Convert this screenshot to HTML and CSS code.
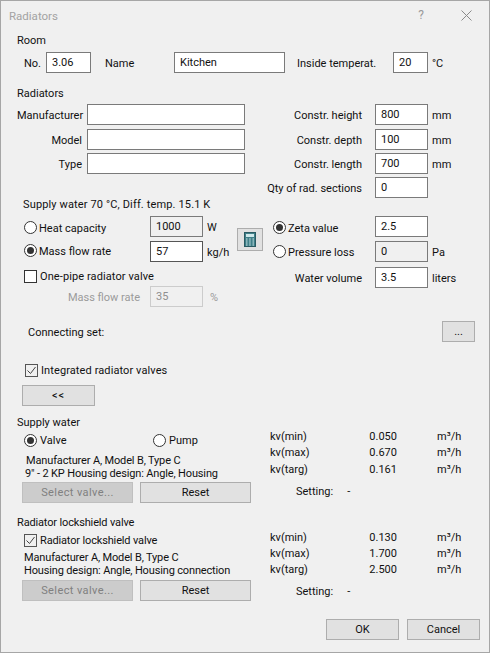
FILE: index.html
```html
<!DOCTYPE html>
<html lang="en">
<head>
<meta charset="utf-8">
<title>Radiators</title>
<link rel="stylesheet" href="styles.css">
</head>
<body>
<div class="dialog">
  <header class="titlebar">
    <span class="title">Radiators</span>
    <span class="help">?</span>
    <svg class="close" width="11" height="11" viewBox="0 0 11 11"><path d="M.5.5l10 10M10.5.5l-10 10" stroke="#8a8a8a" fill="none"/></svg>
  </header>

  <div class="heading">Room</div>
  <div class="room-row">
    <span class="lbl-no">No.</span>
    <div class="field f-no">3.06</div>
    <span class="lbl-name">Name</span>
    <div class="field f-name">Kitchen</div>
    <span class="lbl-temp">Inside temperat.</span>
    <div class="field f-temp">20</div>
    <span class="unit">°C</span>
  </div>

  <div class="heading h-rad">Radiators</div>
  <div class="rad-grid">
    <span class="r">Manufacturer</span><div class="field"></div><span class="r">Constr. height</span><div class="field">800</div><span class="unit">mm</span>
    <span class="r">Model</span><div class="field"></div><span class="r">Constr. depth</span><div class="field">100</div><span class="unit">mm</span>
    <span class="r">Type</span><div class="field"></div><span class="r">Constr. length</span><div class="field">700</div><span class="unit">mm</span>
    <span></span><span></span><span class="r">Qty of rad. sections</span><div class="field">0</div><span></span>
  </div>

  <div class="supply-note">Supply water 70 °C, Diff. temp. 15.1 K</div>

  <div class="flow">
    <div class="flow-left">
      <label class="opt down"><i class="radio"></i>Heat capacity</label><div class="field ro">1000</div><span class="unit">W</span>
      <label class="opt up"><i class="radio on"></i>Mass flow rate</label><div class="field dark">57</div><span class="unit">kg/h</span>
      <label class="opt span3"><i class="check"></i>One-pipe radiator valve</label>
      <span class="r dis pad">Mass flow rate</span><div class="field off">35</div><span class="unit dis u-pct">%</span>
    </div>
    <button class="btn calc" type="button" aria-label="Calculator">
      <svg width="12" height="15" viewBox="0 0 12 15">
        <rect x=".5" y=".5" width="11" height="14" fill="#3f7f88" stroke="#2a5a62"/>
        <rect x="2" y="2" width="8" height="3" fill="#cfe8ea"/>
        <path d="M2 7h1.500M5.200 7h1.500M8.500 7h1.500M2 9h1.500M5.200 9h1.500M8.500 9h1.500M2 11h1.500M5.200 11h1.500M8.500 11h1.500M2 13h1.500M5.200 13h1.500M8.500 13h1.500" stroke="#d5ecec"/>
      </svg>
    </button>
    <div class="flow-right">
      <label class="opt down"><i class="radio on"></i>Zeta value</label><div class="field">2.5</div><span></span>
      <label class="opt"><i class="radio"></i>Pressure loss</label><div class="field ro">0</div><span class="unit">Pa</span>
      <span class="r pad-r">Water volume</span><div class="field">3.5</div><span class="unit">liters</span>
    </div>
  </div>

  <div class="connect">
    <span>Connecting set:</span>
    <button class="btn more" type="button">...</button>
  </div>

  <label class="opt integrated"><i class="check tick"><svg width="11" height="11" viewBox="0 0 11 11"><path d="M1.500 5.500l3 3 5-6.500" fill="none" stroke="#444"/></svg></i>Integrated radiator valves</label>
  <button class="btn collapse" type="button">&lt;&lt;</button>

  <section class="valve v-supply">
    <div class="valve-left">
      <div class="vhead">Supply water</div>
      <div class="vopts">
        <label class="opt o-valve"><i class="radio on"></i>Valve</label>
        <label class="opt"><i class="radio"></i>Pump</label>
      </div>
      <p class="desc d-supply"><span class="in2">Manufacturer A, Model B, Type C</span><br>9" - 2 KP Housing design: Angle, Housing</p>
      <div class="btns"><button class="btn sel" type="button">Select valve...</button><button class="btn rst" type="button">Reset</button></div>
    </div>
    <div class="valve-right">
      <div class="kv">
        <span>kv(min)</span><span class="val">0.050</span><span>m³/h</span>
        <span>kv(max)</span><span class="val">0.670</span><span>m³/h</span>
        <span>kv(targ)</span><span class="val">0.161</span><span>m³/h</span>
      </div>
      <div class="setting"><span>Setting:</span><span>-</span></div>
    </div>
  </section>

  <section class="valve v-lock">
    <div class="valve-left">
      <div class="vhead">Radiator lockshield valve</div>
      <div class="vopts"><label class="opt"><i class="check tick"><svg width="11" height="11" viewBox="0 0 11 11"><path d="M1.500 5.500l3 3 5-6.500" fill="none" stroke="#444"/></svg></i>Radiator lockshield valve</label></div>
      <p class="desc d-lock">Manufacturer A, Model B, Type C<br>Housing design: Angle, Housing connection</p>
      <div class="btns"><button class="btn sel" type="button">Select valve...</button><button class="btn rst" type="button">Reset</button></div>
    </div>
    <div class="valve-right">
      <div class="kv">
        <span>kv(min)</span><span class="val">0.130</span><span>m³/h</span>
        <span>kv(max)</span><span class="val">1.700</span><span>m³/h</span>
        <span>kv(targ)</span><span class="val">2.500</span><span>m³/h</span>
      </div>
      <div class="setting"><span>Setting:</span><span>-</span></div>
    </div>
  </section>

  <footer class="footer">
    <button class="btn act" type="button">OK</button>
    <button class="btn act" type="button">Cancel</button>
  </footer>
</div>
</body>
</html>
```
FILE: styles.css
```css
* { box-sizing: border-box; }
html, body { margin: 0; padding: 0; }
body {
  font: 11px/16px Roboto, "Liberation Sans", sans-serif;
  color: #111;
  background: #f0f0f0;
}
.dialog {
  width: 490px;
  height: 653px;
  background: #f0f0f0;
  box-shadow: inset 0 0 0 1px #a6a6a6;
  overflow: hidden;
  white-space: nowrap;
}
.titlebar {
  height: 32px;
  display: flex;
  align-items: center;
  padding-left: 9px;
}
.title { color: #a3a3a3; flex: 1; font-size: 11.500px; }
.help { color: #9a9a9a; margin: 0 37px 2px 0; font-size: 12px; }
.close { margin: 0 18px 2px 0; }

.heading { height: 16px; padding-left: 17px; line-height: 18px; }
.h-rad { margin-top: 12px; }

.field {
  height: 21px;
  background: #fff;
  border: 1px solid #7a7a7a;
  padding-left: 5px;
  line-height: 20px;
}
.field.ro { background: #f0f0f0; }
.field.dark { border-color: #555; }
.field.off { background: #f0f0f0; border-color: #ccc; color: #8f8f8f; }
.unit { padding-left: 4px; line-height: 23px; }
.r { text-align: right; line-height: 23px; }
.dis { color: #9b9b9b; }

.room-row {
  display: grid;
  grid-template-columns: 22px 45px 83px 111px 108px 35px auto;
  margin-top: 4px;
  padding-left: 24px;
  line-height: 23px;
  height: 21px;
}
.lbl-name { padding-left: 14px; }
.lbl-temp { padding-left: 12px; }

.rad-grid {
  display: grid;
  grid-template-columns: 70px 158px 130px 53px auto;
  grid-template-rows: 25px 24px 24px 22px;
  margin-top: 3px;
  padding-left: 17px;
}
.rad-grid > :nth-child(5n+1) { padding-right: 5px; }
.rad-grid > :nth-child(5n+3) { padding-right: 13px; }
.supply-note {
  height: 10px;
  line-height: 12px;
  padding-left: 23px;
  letter-spacing: .14px;
}

.flow { display: flex; margin-top: 7px; padding-left: 24px; height: 91px; }
.flow-left {
  width: 213px;
  display: grid;
  grid-template-columns: 126px 53px auto;
  grid-template-rows: 25px 25px 20px 21px;
}
.opt { display: flex; align-items: center; gap: 2px; height: 21px; padding-top: 2px; }
.down { margin-top: 1px; }
.up { margin-top: -1px; }
.span3 { grid-column: 1 / 4; height: 20px; gap: 3px; letter-spacing: .1px; }
.pad { padding-right: 10px; }
.u-pct { padding-left: 7px; }
.radio {
  width: 13px; height: 13px;
  border: 1px solid #333;
  border-radius: 50%;
  background: #fff;
  display: block;
  position: relative;
  flex: none;
  margin-bottom: 2px;
}
.radio.on::after {
  content: "";
  position: absolute;
  left: 2px; top: 2px;
  width: 7px; height: 7px;
  border-radius: 50%;
  background: #333;
}
.check {
  width: 13px; height: 13px;
  border: 1px solid #333;
  background: #fff;
  display: block;
  flex: none;
  margin-bottom: 2px;
}
.check.tick { background: #f0f0f0; border-color: #555; }
.check svg { display: block; }

.btn {
  font: inherit;
  color: #111;
  background: #e1e1e1;
  border: 1px solid #adadad;
  border-radius: 0;
  padding: 1px 0 0;
  height: 21px;
  display: block;
}
.calc {
  width: 26px; height: 23px;
  margin-top: 12px;
  padding: 0;
  display: flex; align-items: center; justify-content: center;
  flex: none;
}
.flow-right {
  margin-left: 10px;
  width: 190px;
  display: grid;
  grid-template-columns: 102px 53px auto;
  grid-template-rows: 25px 26px 21px;
}
.pad-r { padding-right: 13px; }

.connect {
  display: flex;
  justify-content: space-between;
  align-items: center;
  height: 21px;
  margin-top: 14px;
  padding: 2px 15px 0 28px;
}
.more { width: 33px; margin-top: -2px; }
.integrated { margin-top: 20px; margin-left: 25px; height: 16px; gap: 3px; letter-spacing: .1px; }
.collapse { width: 73px; margin: 7px 0 0 22px; letter-spacing: 1px; }

.valve { display: grid; grid-template-columns: 270px 1fr; }
.v-supply { margin-top: 8px; }
.v-lock { margin-top: 11px; }
.valve-left { padding-left: 17px; }
.vhead { height: 16px; line-height: 18px; }
.vopts { display: flex; margin: 2px 0 0 7px; height: 16px; }
.vopts .opt { height: 16px; gap: 3px; }
.v-lock .vhead, .v-lock .vopts { letter-spacing: -.15px; }
.o-valve { width: 129px; }
.desc { margin: 0; line-height: 13px; padding: 1px 0 0 8px; height: 26px; letter-spacing: -.15px; }
.d-supply { margin-top: 5px; }
.d-lock { margin-top: 2px; padding-left: 7px; }
.in2 { padding-left: 1px; }
.btns { display: flex; gap: 7px; margin: 3px 0 0 5px; }
.v-lock .btns { margin-top: 4px; }
.sel { width: 111px; background: #ccc; border-color: #bfbfbf; color: #808080; letter-spacing: .4px; }
.rst { width: 111px; }
.valve-right { padding-top: 15px; }
.v-lock .valve-right { padding-top: 16px; }
.kv {
  display: grid;
  grid-template-columns: 60px 67px auto;
  grid-auto-rows: 16px;
}
.v-supply .kv { grid-template-rows: 16px 17px 16px; }
.kv > :nth-child(3n) { padding-left: 40px; }
.val { text-align: right; }
.setting { display: flex; gap: 14px; margin-top: 6px; padding-left: 26px; }
.footer {
  display: flex;
  justify-content: flex-end;
  gap: 8px;
  margin-top: 18px;
  padding-right: 10px;
}
.act { width: 73px; }
```
